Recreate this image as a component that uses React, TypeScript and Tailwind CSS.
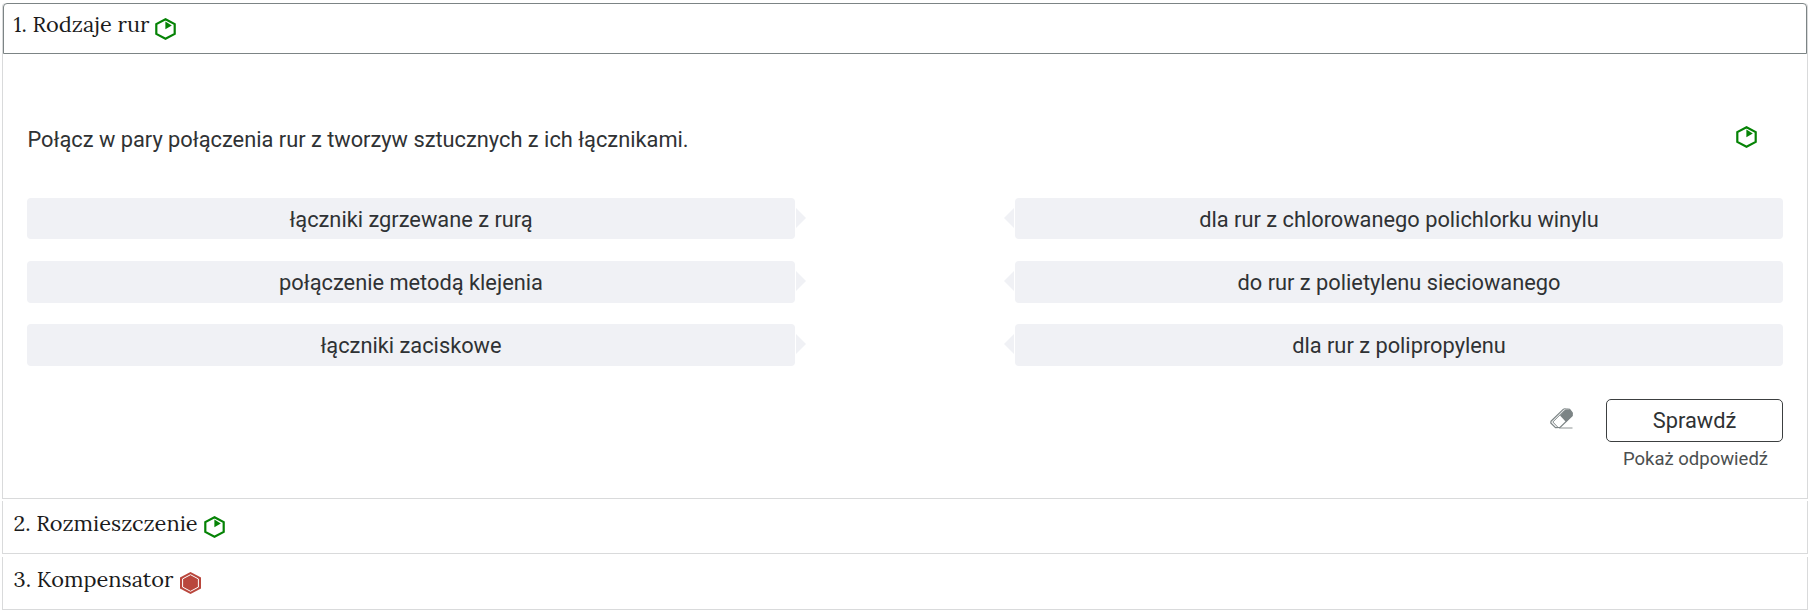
import type { ReactNode } from "react";

type Pair = {
  left: string;
  right: string;
};

const pairs: Pair[] = [
  { left: "łączniki zgrzewane z rurą", right: "dla rur z chlorowanego polichlorku winylu" },
  { left: "połączenie metodą klejenia", right: "do rur z polietylenu sieciowanego" },
  { left: "łączniki zaciskowe", right: "dla rur z polipropylenu" },
];

function EasyIcon({ className }: { className?: string }) {
  return (
    <svg viewBox="0 0 21 22" className={`w-[21px] h-[22px] shrink-0 ${className ?? ""}`}>
      <path d="M10.5 1.3 19.7 6.1v9.8l-9.2 4.8-9.2-4.8V6.1z" fill="none" stroke="#058305" strokeWidth="2.2" />
      <path d="M10.4 3.6v7.6l6.4-3.8z" fill="#058305" />
    </svg>
  );
}

function HardIcon({ className }: { className?: string }) {
  return (
    <svg viewBox="0 0 21 22" className={`w-[21px] h-[22px] shrink-0 ${className ?? ""}`}>
      <path d="M10.5 0 21 5.5v11L10.5 22 0 16.5v-11z" fill="#b9463c" />
      <path d="M10.5 2.7 18.4 6.9v8.2l-7.9 4.2-7.9-4.2V6.9z" fill="none" stroke="#fff" strokeWidth="1" />
    </svg>
  );
}

function EraserIcon() {
  return (
    <svg viewBox="0 0 23 21" className="w-[23px] h-[21px]">
      <path d="M9 20h13.5" stroke="#b9bdbd" strokeWidth="1.6" />
      <path
        d="M1 13.2 13.2 1.4q1-.8 2.2-.6l4.2.4 2.6 3.6v3L10 19.4l-4.5.2L.8 15z"
        fill="#fff"
        stroke="#7c8485"
        strokeWidth="1.2"
      />
      <path d="M2.8 14 14.6 2.2M2.8 14l5.4 5.6" fill="none" stroke="#7c8485" strokeWidth="1" />
      <path d="m10 7.6 5.6-6 4.2.2 2.6 3.4-.2 2.6-6.2 6.2z" fill="#7c8485" />
    </svg>
  );
}

function SectionTitle({ children }: { children: ReactNode }) {
  return (
    <h3 className="font-['Lora','Liberation_Serif',serif] text-[21.8px] leading-[30px] whitespace-pre text-[#1b1b1b]">
      {children}
    </h3>
  );
}

function PairRow({ left, right }: Pair) {
  return (
    <div className="flex h-[41.8px] items-stretch justify-between">
      <div className="flex items-center">
        <div className="flex h-full w-[768px] items-center justify-center rounded bg-[#f0f1f5] pt-[3.3px]">{left}</div>
        <svg viewBox="0 0 10 20" className="mb-px ml-px h-5 w-2.5">
          <path d="M0 0 10 10 0 20z" fill="#f0f1f5" />
        </svg>
      </div>
      <div className="flex items-center">
        <svg viewBox="0 0 10 20" className="mr-px mb-px h-5 w-2.5">
          <path d="M10 0 0 10 10 20z" fill="#f0f1f5" />
        </svg>
        <div className="flex h-full w-[768px] items-center justify-center rounded bg-[#f0f1f5] pt-[3.3px]">{right}</div>
      </div>
    </div>
  );
}

export default function App() {
  return (
    <div className="h-[611px] w-[1808px] bg-white pt-[3px] pl-[2px] font-['Roboto',sans-serif] text-[21.8px] text-[#2f3234]">
      <section className="h-[496px] rounded-t border border-[#d9dadb] border-t-0">
        <div className="flex h-[51px] items-start rounded-t border border-[#7c8485] pt-[5px] pl-[9.5px]">
          <SectionTitle>1. Rodzaje rur</SectionTitle>
          <EasyIcon className="mt-[9px] ml-[6px]" />
        </div>

        <div className="pr-6 pl-6">
          <div className="flex justify-between pt-[71px]">
            <p className="pl-[0.5px] leading-[30px]">
              Połącz w pary połączenia rur z tworzyw sztucznych z ich łącznikami.
            </p>
            <EasyIcon className="mt-px mr-[26px]" />
          </div>

          <div className="mt-[42.6px] flex flex-col gap-[21.4px]">
            {pairs.map((pair) => (
              <PairRow key={pair.left} {...pair} />
            ))}
          </div>

          <div className="mt-[33.2px] flex items-start justify-end">
            <button className="mt-[9px] mr-[33px]" aria-label="Wyczyść">
              <EraserIcon />
            </button>
            <div className="flex flex-col items-center">
              <button className="h-[43px] w-[177px] rounded-[5px] border border-[#3c3f40] pt-[1.5px]">Sprawdź</button>
              <button className="mt-[5px] ml-[2px] text-[18.5px] leading-6 text-[#4b4f50]">Pokaż odpowiedź</button>
            </div>
          </div>
        </div>
      </section>

      <section className="mt-[2px] flex h-[53px] items-start border border-t-0 border-[#d9dadb] pt-[7px] pl-[10.5px]">
        <SectionTitle>2. Rozmieszczenie</SectionTitle>
        <EasyIcon className="mt-[8px] ml-[6px]" />
      </section>

      <section className="mt-[3px] flex h-[53px] items-start border border-t-0 border-[#d9dadb] pt-[7px] pl-[10.5px]">
        <SectionTitle>3. Kompensator</SectionTitle>
        <HardIcon className="mt-[8px] ml-[7px]" />
      </section>
    </div>
  );
}
